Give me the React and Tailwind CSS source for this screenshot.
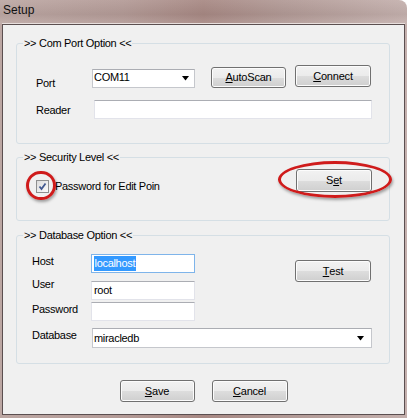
import React from 'react';

const Btn = ({ children, className = '' }) => (
  <button
    className={`flex shrink-0 items-center justify-center rounded-[3px] border border-[#707070] bg-[linear-gradient(#f2f2f2_0%,#ebebeb_50%,#dddddd_51%,#cfcfcf_100%)] shadow-[inset_0_0_0_1px_#fcfcfc] text-[11px] leading-[13px] tracking-[-0.2px] text-black ${className}`}
  >
    {children}
  </button>
);

const U = ({ children }) => <span className="underline underline-offset-[1px]">{children}</span>;

const Arrow = () => (
  <svg width="8" height="5" viewBox="0 0 8 5" className="shrink-0">
    <polygon points="0,0 7,0 3.5,4.5" fill="#000" />
  </svg>
);

const GroupBox = ({ label, className = '', children }) => (
  <div className={`relative ml-[13px] w-[374px] rounded-[3px] border border-[#d5dfe5] ${className}`}>
    <span className="absolute left-[6px] top-[-7px] bg-[#f0f0f0] px-[1px] leading-[13px]">{label}</span>
    {children}
  </div>
);

export default function App() {
  return (
    <div className="h-[418px] w-[407px] bg-white font-['Liberation_Sans',Arial,sans-serif] text-[11px] tracking-[-0.3px] text-black">
      <div className="relative flex h-[418px] w-[407px] flex-col rounded-tr-[8px] bg-[linear-gradient(90deg,#bca7a3_0%,#b39a96_30%,#a78883_50%,#b19995_70%,#c4b0ad_100%)]">
        {/* title bar */}
        <div className="h-[24px] shrink-0 bg-[linear-gradient(180deg,rgba(255,255,255,0.08),rgba(0,0,0,0.04)_60%,rgba(255,255,255,0.1))] pl-[3px] pt-[3px] text-[12px] leading-[14px] tracking-normal text-[#111]">
          Setup
        </div>

        {/* client area */}
        <div className="ml-[2px] h-[391px] w-[403px] border border-[#5b4f50] bg-[#f0f0f0] shadow-[0_-1px_0_#e8dfdd]">
          {/* Com Port */}
          <GroupBox label=">> Com Port Option <<" className="mt-[18px] h-[101px]">
            <div className="flex flex-col pl-[19px] pt-[21px]">
              <div className="flex h-[24px] items-start">
                <span className="mt-[12px] w-[56px] leading-[13px]">Port</span>
                <div className="mt-[4px] flex h-[19px] w-[103px] items-center justify-between border border-[#c5c7cc] border-t-[#abadb3] bg-white pl-[1px] pr-[4px]">
                  <span className="-mt-[2px] leading-[13px]">COM11</span>
                  <Arrow />
                </div>
                <Btn className="ml-[16px] mt-[2px] h-[21px] w-[75px]">
                  <U>A</U>utoScan
                </Btn>
                <Btn className="ml-[9px] h-[22px] w-[76px]">
                  <U>C</U>onnect
                </Btn>
              </div>
              <div className="mt-[11px] flex items-start">
                <span className="mt-[4px] w-[58px] leading-[13px]">Reader</span>
                <div className="h-[19px] w-[278px] border border-[#e2e3ea] border-t-[#abadb3] bg-white" />
              </div>
            </div>
          </GroupBox>

          {/* Security */}
          <GroupBox label=">> Security Level <<" className="mt-[13px] h-[64px]">
            <div className="flex items-start justify-between pl-[19px] pr-[17px] pt-[11px]">
              <div className="mt-[11px] flex items-center">
                <div className="flex h-[13px] w-[13px] items-center justify-center border border-[#8e8f8f] bg-[linear-gradient(135deg,#dcdcdc,#fbfbfb)]">
                  <svg width="9" height="9" viewBox="0 0 9 9">
                    <polyline points="1.5,4.5 3.5,7 7.5,1.5" fill="none" stroke="#41588f" strokeWidth="1.8" />
                  </svg>
                </div>
                <span className="ml-[6px] leading-[13px]">Password for Edit Poin</span>
              </div>
              <Btn className="h-[23px] w-[76px]">
                S<U>e</U>t
              </Btn>
            </div>
          </GroupBox>

          {/* Database */}
          <GroupBox label=">> Database Option <<" className="mt-[14px] h-[129px]">
            <div className="flex flex-col pl-[15px] pt-[18px]">
              <div className="flex h-[19px] items-start">
                <span className="mt-[1px] w-[59px] leading-[13px]">Host</span>
                <div className="flex h-[19px] w-[104px] items-center border border-[#7eb4ea] bg-white pl-[2px]">
                  <span className="bg-[#3399ff] px-[0.5px] leading-[15px] text-white">localhost</span>
                </div>
                <Btn className="ml-[100px] mt-[6px] h-[22px] w-[76px]">
                  <U>T</U>est
                </Btn>
              </div>
              <div className="mt-[8px] flex items-start">
                <span className="-mt-[3px] w-[59px] leading-[13px]">User</span>
                <div className="flex h-[19px] w-[104px] items-center border border-[#e2e3ea] border-t-[#abadb3] bg-white pl-[2px]">
                  <span className="leading-[13px]">root</span>
                </div>
              </div>
              <div className="mt-[2px] flex items-start">
                <span className="mt-[1px] w-[59px] leading-[13px]">Password</span>
                <div className="h-[19px] w-[104px] border border-[#e2e3ea] border-t-[#abadb3] bg-white" />
              </div>
              <div className="mt-[7px] flex items-start">
                <span className="mt-[1px] w-[60px] leading-[13px]">Database</span>
                <div className="flex h-[20px] w-[280px] items-center justify-between border border-[#c5c7cc] border-t-[#abadb3] bg-white pl-[1px] pr-[6px]">
                  <span className="leading-[13px]">miracledb</span>
                  <Arrow />
                </div>
              </div>
            </div>
          </GroupBox>

          <div className="mt-[16px] flex justify-center gap-[17px]">
            <Btn className="h-[22px] w-[75px]">
              <U>S</U>ave
            </Btn>
            <Btn className="h-[22px] w-[76px]">
              <U>C</U>ancel
            </Btn>
          </div>
        </div>

        {/* red annotation ellipses */}
        <div className="absolute left-[26px] top-[171px] h-[29px] w-[30px] rounded-full border-[3px] border-[#cf1b1b] shadow-[1px_2px_3px_rgba(0,0,0,0.35)]" />
        <div className="absolute left-[278px] top-[161px] h-[37px] w-[114px] rounded-[50%] border-[3px] border-[#cf1b1b] shadow-[1px_2px_3px_rgba(0,0,0,0.35)]" />
      </div>
    </div>
  );
}
